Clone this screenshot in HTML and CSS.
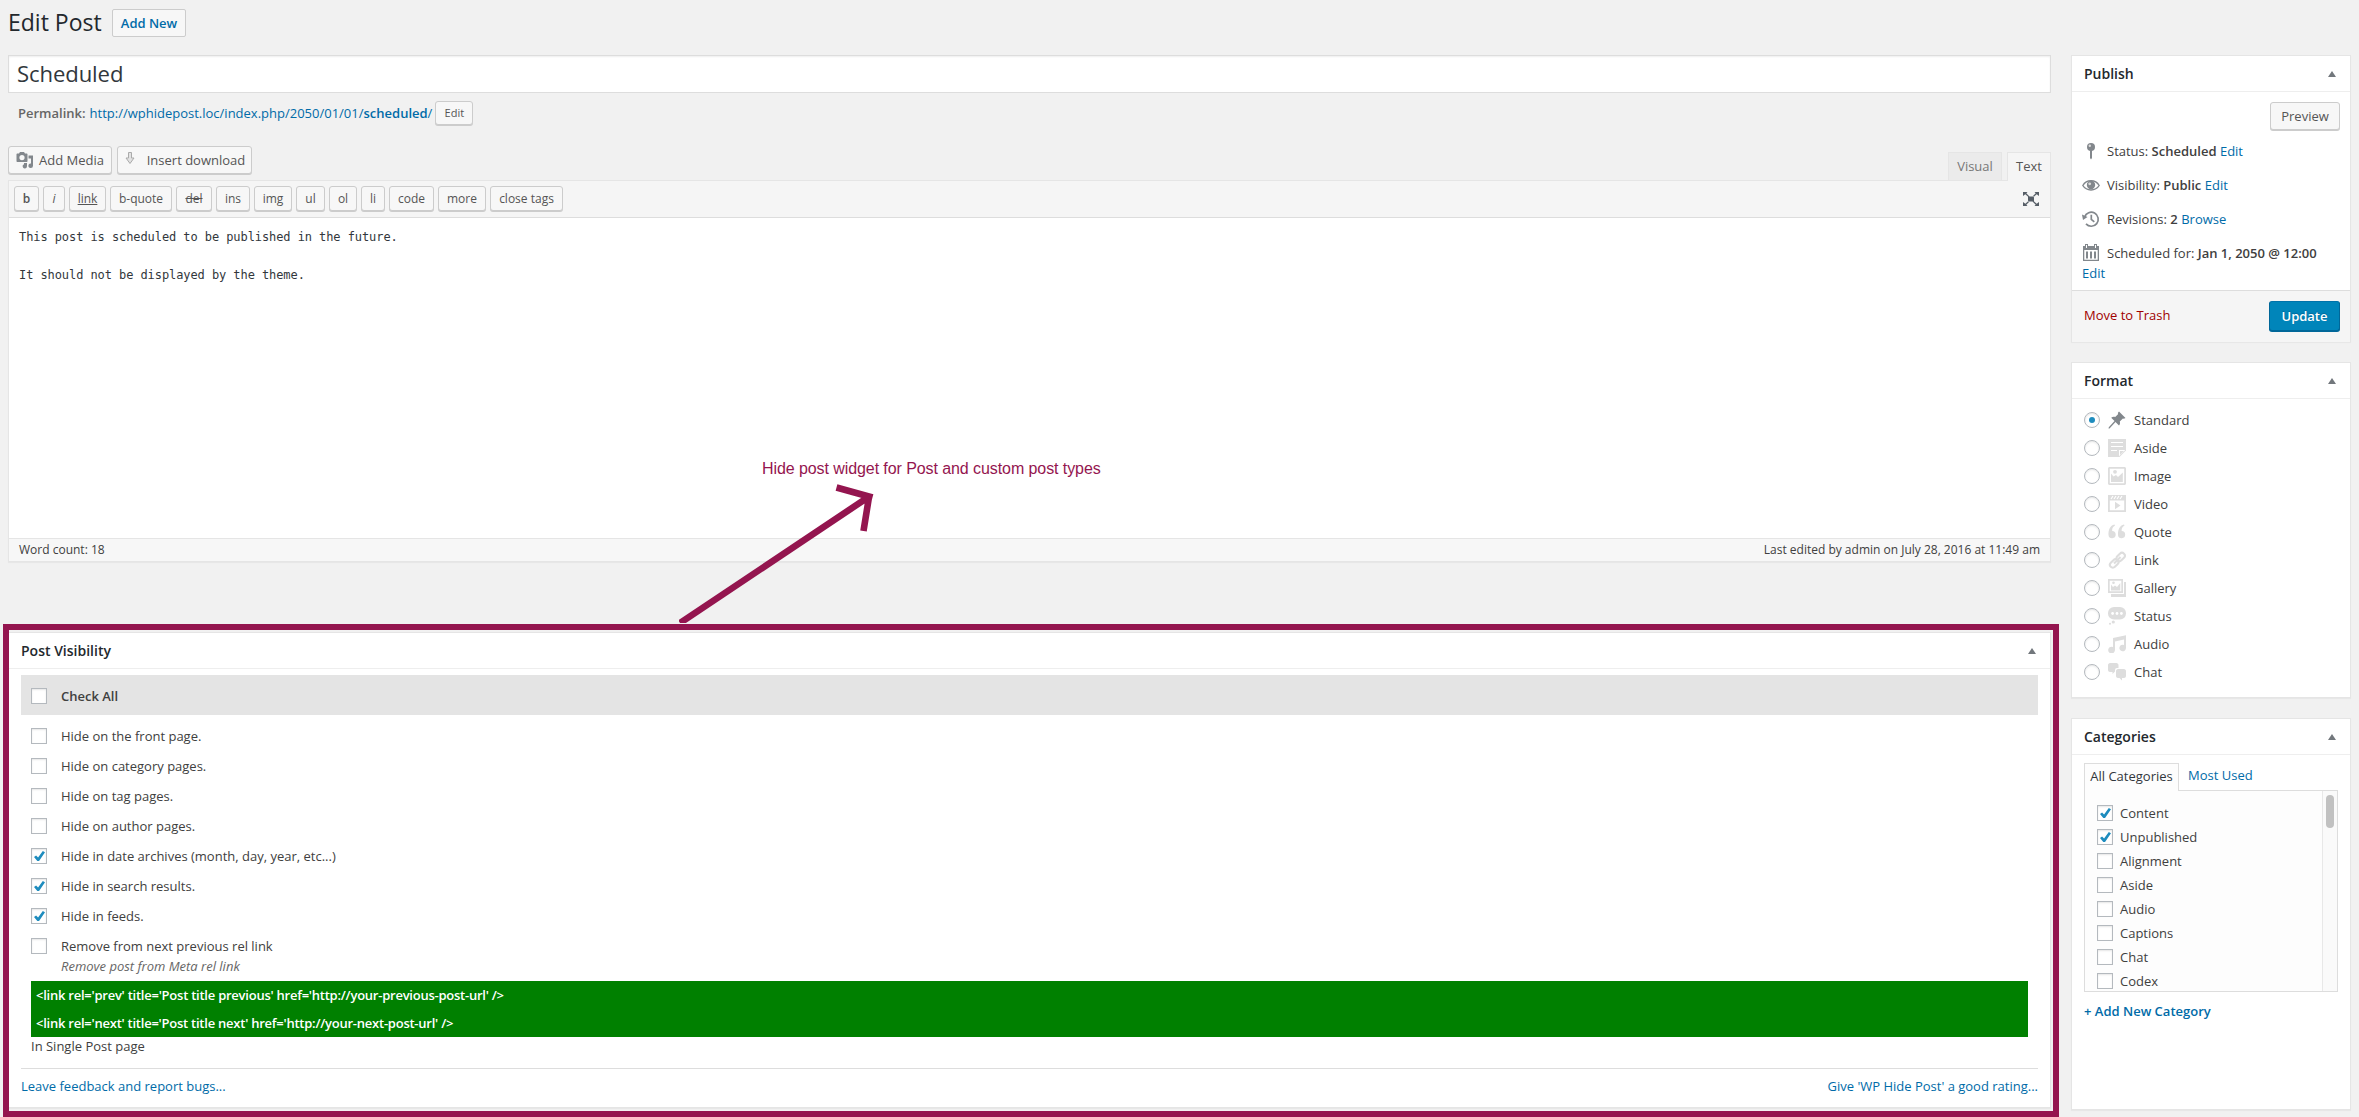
FILE: index.html
```html
<!DOCTYPE html>
<html lang="en">
<head>
<meta charset="utf-8">
<title>Edit Post</title>
<link rel="stylesheet" href="styles.css">
</head>
<body>
<header class="page-head"><h1>Edit Post</h1><a class="add-new">Add New</a></header>
<div class="columns">
<main class="main">
  <div class="title-field">Scheduled</div>
  <div class="permalink"><b class="plabel">Permalink:</b><a>http://wphidepost.loc/index.php/2050/01/01/<b>scheduled</b>/</a><span class="btn small">Edit</span></div>
  <div class="media-row">
    <span class="btn media"><svg width="18" height="18" viewBox="0 0 18 18" fill="#82878c"><path fill-rule="evenodd" d="M1.500 2.500H3L4 1h4l1 1.500h1.500c.6 0 1 .4 1 1V10c0 .6-.4 1-1 1h-9c-.6 0-1-.4-1-1V3.500c0-.6.4-1 1-1zM6 4a2.600 2.600 0 1 0 0 5.200A2.600 2.600 0 0 0 6 4z"/><path d="M12.500 4.500H17v10.200a2.300 2.300 0 1 1-2-2.200V7.500h-2.500zM8 12h3v3.200a2.200 2.200 0 1 1-3-2z"/></svg>Add Media</span>
    <span class="btn download"><svg width="12" height="14" viewBox="0 0 12 14" fill="#e2e2e2" stroke="#aaa"><path d="M4.500 1.500h3V7H10l-4 5.500L2 7h2.500z"/></svg>Insert download</span>
    <div class="tabs"><span class="tab">Visual</span><span class="tab active">Text</span></div>
  </div>
  <div class="editor">
    <div class="toolbar">
      <span class="q w25"><b>b</b></span><span class="q w22"><i>i</i></span><span class="q w37"><u>link</u></span><span class="q w62">b-quote</span><span class="q w36"><del>del</del></span><span class="q w34">ins</span><span class="q w38">img</span><span class="q w29">ul</span><span class="q w28">ol</span><span class="q w24">li</span><span class="q w45">code</span><span class="q w48">more</span><span class="q w73">close tags</span>
      <svg class="dfw" width="18" height="16" viewBox="0 0 18 16" fill="#555d66"><path d="M6 5.500h6v5H6zM1 1h4.500L4.300 2.300 7.500 5.500l-.8.8-3.400-3L1 5zM17 1h-4.500l1.200 1.300-3.200 3.200.8.8 3.400-3L17 5zM1 15h4.500l-1.200-1.300 3.200-3.200-.8-.8-3.400 3L1 11zM17 15h-4.500l1.200-1.300-3.200-3.200.8-.8 3.400 3L17 11z"/></svg>
    </div>
    <div class="content">This post is scheduled to be published in the future.

It should not be displayed by the theme.</div>
    <div class="status-bar"><span>Word count: 18</span><span>Last edited by admin on July 28, 2016 at 11:49 am</span></div>
  </div>
  <section class="box visibility">
    <h2>Post Visibility<i class="toggle"></i></h2>
    <div class="vis-body">
      <label class="row all"><i class="check"></i>Check All</label>
      <div class="rows">
        <label class="row"><i class="check"></i>Hide on the front page.</label>
        <label class="row"><i class="check"></i>Hide on category pages.</label>
        <label class="row"><i class="check"></i>Hide on tag pages.</label>
        <label class="row"><i class="check"></i>Hide on author pages.</label>
        <label class="row"><i class="check on"></i>Hide in date archives (month, day, year, etc...)</label>
        <label class="row"><i class="check on"></i>Hide in search results.</label>
        <label class="row"><i class="check on"></i>Hide in feeds.</label>
        <label class="row"><i class="check"></i>Remove from next previous rel link</label>
      </div>
      <em class="desc">Remove post from Meta rel link</em>
      <div class="code"><div>&lt;link rel='prev' title='Post title previous' href='http://your-previous-post-url' /&gt;</div><div>&lt;link rel='next' title='Post title next' href='http://your-next-post-url' /&gt;</div></div>
      <div class="single">In Single Post page</div>
      <div class="foot"><a>Leave feedback and report bugs...</a><a>Give 'WP Hide Post' a good rating...</a></div>
    </div>
  </section>
</main>
<aside class="side">
  <section class="box publish">
    <h2>Publish<i class="toggle"></i></h2>
    <div class="preview-row"><span class="btn preview">Preview</span></div>
    <div class="misc">
      <p><svg width="18" height="18" viewBox="0 0 18 18" fill="#82878c"><circle cx="9" cy="5" r="4"/><path d="M8 8h2v8l-1 1.500L8 16z"/><circle cx="7.800" cy="3.800" r="1.200" fill="#ddd"/></svg>Status:&nbsp;<b>Scheduled</b>&nbsp;<a>Edit</a></p>
      <p><svg width="18" height="18" viewBox="0 0 18 18"><path d="M.8 9.500C4.500 3.200 13.500 3.200 17.200 9.500 13.500 15.400 4.500 15.400.8 9.500z" fill="#fff" stroke="#82878c" stroke-width="1.400"/><circle cx="9" cy="9" r="4.200" fill="#82878c"/><circle cx="7.700" cy="7.800" r="1.400" fill="#ddd"/></svg>Visibility:&nbsp;<b>Public</b>&nbsp;<a>Edit</a></p>
      <p><svg width="18" height="18" viewBox="0 0 18 18" fill="none" stroke="#82878c" stroke-width="1.700"><path d="M2.600 7A7 7 0 1 1 4 13.900M9.300 4.800v4.500l3 2.500"/><path d="M0 4.500 5.500 7 1 10z" fill="#82878c" stroke="none"/></svg>Revisions:&nbsp;<b>2</b>&nbsp;<a>Browse</a></p>
      <p><svg width="18" height="18" viewBox="0 0 18 18" fill="#82878c"><path fill-rule="evenodd" d="M1 2h2V0h3v2h6V0h3v2h2v15H1zm1.300 4v9.700h13.400V6z"/><path d="M4 7.500h2v7H4zm4 0h2v7H8zm4 0h2v7h-2z"/><path d="M4 1h1v3H4zm9 0h1v3h-1z" fill="#fff"/></svg>Scheduled for:&nbsp;<b>Jan 1, 2050 @ 12:00</b></p>
      <a class="wrap-edit">Edit</a>
    </div>
    <div class="actions"><a class="trash">Move to Trash</a><span class="primary">Update</span></div>
  </section>
  <section class="box format">
    <h2>Format<i class="toggle"></i></h2>
    <div class="formats">
      <label><i class="radio on"></i><svg width="18" height="18" viewBox="0 0 18 18" fill="#82878c"><path d="M11 .5 17.500 7l-1.600.8-1-.4-3.100 3.100c.5 1.700.2 3-.8 4L7.500 11l-6 6.500L.5 17.500l.3-1.300L6.500 10 3.200 6.800c1.200-1 2.600-1.200 4-.7l3-3-.4-1.200z"/></svg>Standard</label>
      <label><i class="radio"></i><svg width="18" height="18" viewBox="0 0 18 18" fill="#ddd"><path d="M0 0h18v11.500L11.500 18H0z"/><path d="M3 3.500h12M3 7.500h12M3 11.500h6" fill="none" stroke="#fff" stroke-width="1.100"/><path d="M11 11h6.300l-6.300 6.300z" fill="#fff"/><path d="M12 12h4l-4 4z"/></svg>Aside</label>
      <label><i class="radio"></i><svg width="18" height="18" viewBox="0 0 18 18" fill="#ddd"><path fill-rule="evenodd" d="M1 0h16l1 1v16l-1 1H1l-1-1V1zm.8 1.800v14.400h14.400V1.800z"/><circle cx="7" cy="4.800" r="1.900"/><path d="m3 6.500 2.500 3L8 8l2 2 4.800-4.500V15H3z"/></svg>Image</label>
      <label><i class="radio"></i><svg width="18" height="18" viewBox="0 0 18 18" fill="#ddd"><path fill-rule="evenodd" d="M0 0h18v17H0zm1.800 5.500v9.800h14.400V5.500z"/><path d="m3 4 2-3m1 3 2-3m1 3 2-3m1 3 2-3" stroke="#fff" stroke-width="1.200"/><path d="M7 6.700v7.500l5.500-3.800z"/></svg>Video</label>
      <label><i class="radio"></i><svg width="18" height="18" viewBox="0 0 18 18" fill="#ddd"><path d="M7 2.500C4.500 4 4 6 4.200 8A3.600 3.600 0 1 1 .5 12C.2 7 2 2.500 6.500 1.500zM16.500 2.500C14 4 13.500 6 13.700 8a3.600 3.600 0 1 1-3.700 4c-.3-5 1.500-9.500 6-10.500z"/></svg>Quote</label>
      <label><i class="radio"></i><svg width="18" height="18" viewBox="0 0 18 18" fill="none" stroke="#ddd" stroke-width="2.100"><rect x="7.900" y="3.100" width="9.500" height="5.800" rx="2.900" transform="rotate(-45 12.650 6)"/><rect x="1.400" y="9.600" width="9.500" height="5.800" rx="2.900" transform="rotate(-45 6.150 12.500)"/><path d="m6 12.500 6.500-6.500"/></svg>Link</label>
      <label><i class="radio"></i><svg width="18" height="18" viewBox="0 0 18 18" fill="#ddd"><path fill-rule="evenodd" d="M0 0h15v14H0zm1.700 1.700v10.600h11.600V1.700z"/><path d="M3 5.500 5 8l2-1.500L9 8l3.300-4v7.500H3zM16 3h2v15H3v-3h13z"/><circle cx="5.500" cy="3.700" r="1.300"/></svg>Gallery</label>
      <label><i class="radio"></i><svg width="18" height="18" viewBox="0 0 18 18" fill="#ddd"><rect y="0" width="18" height="12.500" rx="6"/><circle cx="5.300" cy="15" r="1.600"/><circle cx="2" cy="16.800" r="1"/><g fill="#fff"><circle cx="4.600" cy="6.500" r="1.400"/><circle cx="9" cy="6.500" r="1.400"/><circle cx="13.400" cy="6.500" r="1.400"/></g></svg>Status</label>
      <label><i class="radio"></i><svg width="18" height="18" viewBox="0 0 18 18" fill="#ddd"><path d="M5 3 18 .3V13a3.300 3.300 0 1 1-2-3V4.500L7 6.500V15a3.400 3.400 0 1 1-2-3z"/></svg>Audio</label>
      <label><i class="radio"></i><svg width="18" height="18" viewBox="0 0 18 18" fill="#ddd"><path d="M2 0h6.500c1 0 2 1 2 2v3H9Q7 5 7 7v1.500L4.500 11V9H2C1 9 0 8 0 7V2C0 1 1 0 2 0z"/><path d="M10 6h6c1 0 2 1 2 2v5c0 1-1 2-2 2h-2v2.500L11.500 15H10c-1 0-2-1-2-2V8c0-1 1-2 2-2z"/></svg>Chat</label>
    </div>
  </section>
  <section class="box categories">
    <h2>Categories<i class="toggle"></i></h2>
    <div class="cat-tabs"><span class="cat-tab">All Categories</span><a>Most Used</a></div>
    <div class="cat-panel">
      <div class="cat-list">
        <label><i class="check on"></i>Content</label><label><i class="check on"></i>Unpublished</label><label><i class="check"></i>Alignment</label><label><i class="check"></i>Aside</label><label><i class="check"></i>Audio</label><label><i class="check"></i>Captions</label><label><i class="check"></i>Chat</label><label><i class="check"></i>Codex</label>
      </div>
      <div class="track"><i class="thumb"></i></div>
    </div>
    <a class="add-cat">+ Add New Category</a>
  </section>
</aside>
</div>
<div class="frame"></div>
<svg class="arrow" width="200" height="143" viewBox="0 0 200 143" fill="none" stroke="#94154f" stroke-width="6.600"><path d="M1 143 188 18M157.500 7.500l36 10M190 17l-5.500 34"/></svg>
<div class="note">Hide post widget for Post and custom post types</div>
</body>
</html>
```
FILE: styles.css
```css
* { box-sizing: border-box; }
body { margin: 0; height: 1117px; overflow: hidden; position: relative; background: #f1f1f1; color: #404040; font: 13px/19px "Open Sans", sans-serif; }
a { color: #006ba8; }
b, h2 { font-weight: 600; }
svg { flex: none; }
.page-head { height: 55px; padding: 9px 0 0 8px; display: flex; align-items: flex-start; }
h1 { margin: 0; width: 104px; font-size: 23px; font-weight: 400; line-height: 27px; color: #23282d; white-space: nowrap; }
.add-new { width: 74px; height: 28px; border: 1px solid #ccc; border-radius: 2px; background: #f7f7f7; font-weight: 600; line-height: 27px; text-align: center; }
.columns { display: grid; grid-template-columns: 2043px 280px; gap: 20px; padding-left: 8px; }
.title-field { height: 38px; border: 1px solid #ddd; background: #fff; box-shadow: inset 0 1px 2px rgba(0,0,0,.07); padding-left: 8px; font-size: 22.100px; letter-spacing: -.1px; line-height: 35px; color: #32373c; }
.permalink { height: 53px; padding: 8px 0 0 10px; display: flex; align-items: flex-start; line-height: 24px; }
.plabel { color: #666; margin-right: 4px; }
.btn { display: flex; align-items: center; justify-content: center; height: 28px; border: 1px solid #ccc; border-radius: 3px; background: #f7f7f7; box-shadow: 0 1px 0 #ccc; color: #555; white-space: nowrap; }
.small { width: 38px; height: 24px; font-size: 11px; margin-left: 3px; }
.media-row { height: 34px; display: flex; gap: 5px; align-items: flex-start; }
.media { width: 104px; gap: 5px; }
.download { width: 135px; gap: 11px; }
.download svg { margin-top: -5px; }
.tabs { margin: 6px 0 0 auto; display: flex; gap: 5px; }
.tab { width: 54px; height: 28px; border: 1px solid #e5e5e5; border-bottom: 0; background: #ebebeb; color: #777; text-align: center; line-height: 26px; }
.tab.active { width: 44px; height: 29px; background: #f5f5f5; color: #555; position: relative; z-index: 1; }
.editor { height: 382px; border: 1px solid #e5e5e5; display: flex; flex-direction: column; background: #fff; box-shadow: 0 1px 1px rgba(0,0,0,.04); }
.toolbar { height: 37px; padding: 5px 10px 0 5px; display: flex; align-items: flex-start; gap: 4px; background: #f5f5f5; border-bottom: 1px solid #ddd; }
.q { height: 25px; border: 1px solid #ccc; border-radius: 3px; background: #f7f7f7; box-shadow: 0 1px 0 #ccc; color: #555; font-size: 12px; line-height: 23px; text-align: center; white-space: nowrap; }
.w25 { width: 25px; } .w22 { width: 22px; } .w37 { width: 37px; } .w62 { width: 62px; } .w36 { width: 36px; } .w34 { width: 34px; } .w38 { width: 38px; } .w29 { width: 29px; } .w28 { width: 28px; } .w24 { width: 24px; } .w45 { width: 45px; } .w48 { width: 48px; } .w73 { width: 73px; }
.dfw { margin: 5px 0 0 auto; }
.content { flex: 1; padding: 10px 10px; font: 12px/19px "DejaVu Sans Mono", monospace; letter-spacing: -.08px; white-space: pre-wrap; color: #32373c; }
.status-bar { height: 23px; border-top: 1px solid #e5e5e5; background: #f7f7f7; display: flex; justify-content: space-between; padding: 0 10px; font-size: 12px; line-height: 21px; }
.box { border: 1px solid #e5e5e5; background: #fff; box-shadow: 0 1px 1px rgba(0,0,0,.04); }
.box h2 { margin: 0; height: 36px; border-bottom: 1px solid #eee; padding: 0 14px 0 12px; display: flex; align-items: center; justify-content: space-between; font-size: 14px; color: #23282d; }
.toggle { border: 4px solid transparent; border-top: 0; border-bottom: 6px solid #72777c; }
.visibility { margin-top: 70px; height: 476px; }
.vis-body { padding: 6px 12px 0; }
.row { display: flex; align-items: center; height: 30px; padding-left: 10px; gap: 14px; }
.row.all { height: 40px; background: #e4e4e4; font-weight: 600; padding-top: 2px; margin-bottom: 6px; }
.check { display: block; flex: none; width: 16px; height: 16px; border: 1px solid #b4b9be; background: #fff; box-shadow: inset 0 1px 2px rgba(0,0,0,.1); }
.check.on::after { content: ""; display: block; width: 11px; height: 10px; margin: 2px 0 0 2px; background: #1e8cbe; clip-path: polygon(0 60%, 19% 45%, 37% 66%, 80% 0, 100% 12%, 46% 100%, 30% 100%); }
.desc { display: block; margin: -4px 0 0 40px; height: 24px; color: #666; }
.code { margin: 0 10px; background: #008000; color: #fff; font-weight: 600; line-height: 28px; padding-left: 5px; letter-spacing: -.24px; }
.single { margin: 0 10px; height: 31px; }
.foot { border-top: 1px solid #ddd; padding-top: 8px; display: flex; justify-content: space-between; }
.side { display: flex; flex-direction: column; gap: 20px; }
.publish { height: 287px; }
.preview-row { display: flex; justify-content: flex-end; height: 42px; padding: 10px 10px 0; }
.preview { width: 70px; }
.misc { height: 156px; padding-left: 10px; }
.misc p { margin: 0; height: 34px; display: flex; align-items: center; white-space: nowrap; }
.misc svg { margin-right: 7px; }
.wrap-edit { display: block; margin-top: -6px; }
.actions { height: 52px; border-top: 1px solid #ddd; background: #f5f5f5; display: flex; justify-content: space-between; padding: 10px 10px 0 12px; }
.trash { color: #a00000; line-height: 28px; }
.primary { width: 71px; height: 30px; border: 1px solid #006799; border-top-color: #0073aa; border-radius: 3px; background: #0085ba; box-shadow: 0 1px 0 #006799; color: #fff; font-weight: 600; line-height: 28px; text-align: center; text-shadow: 0 -1px 1px #006799; }
.format { height: 336px; }
.formats { padding: 7px 12px 0; }
.formats label { height: 28px; display: flex; align-items: center; }
.formats svg { margin: 0 8px 0 8px; }
.radio { width: 16px; height: 16px; border: 1px solid #b4b9be; border-radius: 50%; box-shadow: inset 0 1px 2px rgba(0,0,0,.1); display: flex; align-items: center; justify-content: center; }
.radio.on::after { content: ""; width: 6px; height: 6px; border-radius: 50%; background: #1e8cbe; }
.categories { height: 392px; }
.cat-tabs { display: flex; padding: 8px 12px 0; height: 35px; line-height: 25px; gap: 9px; }
.cat-tab { width: 95px; height: 28px; border: 1px solid #ddd; border-bottom: 0; background: #fdfdfd; text-align: center; color: #32373c; white-space: nowrap; position: relative; z-index: 1; }
.cat-panel { height: 202px; margin: 0 12px; border: 1px solid #ddd; background: #fdfdfd; display: flex; overflow: hidden; }
.cat-list { flex: 1; padding: 10px 0 0 12px; }
.cat-list label { height: 24px; display: flex; align-items: center; gap: 7px; }
.track { width: 15px; border-left: 1px solid #e8e8e8; background: #fafafa; padding: 4px 3px; }
.thumb { display: block; width: 8px; height: 33px; border-radius: 4px; background: #c1c1c1; }
.add-cat { display: block; margin: 10px 12px; font-weight: 600; }
.frame { position: absolute; left: 3px; top: 624px; width: 2056px; height: 493px; border: 6px solid #94154f; }
.arrow { position: absolute; left: 679px; top: 480px; }
.note { position: absolute; left: 762px; top: 459px; font: 16px/20px "Liberation Sans", sans-serif; letter-spacing: -.08px; color: #94154f; white-space: nowrap; }
```
